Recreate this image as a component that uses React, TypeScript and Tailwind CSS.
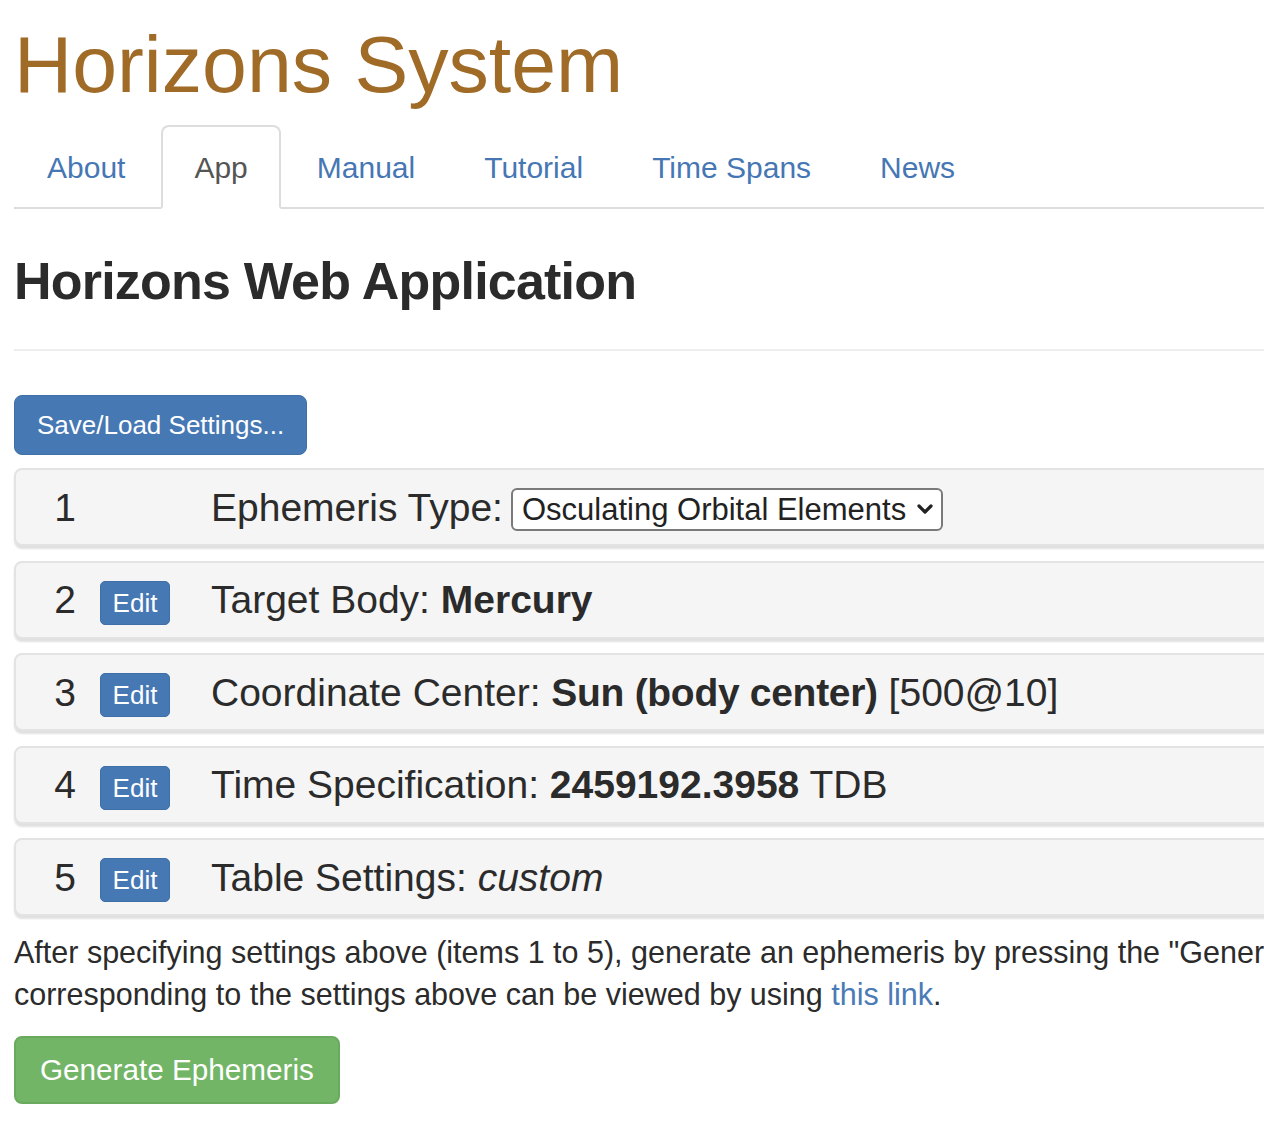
import React from "react";

const tabs = ["About", "App", "Manual", "Tutorial", "Time Spans", "News"];

function EditBtn() {
  return (
    <span className="mt-[6px] flex h-[44px] w-[70px] items-center justify-center rounded-[5px] border border-[#3f6fa9] bg-[#4678b4] text-[26px] leading-none text-white">
      Edit
    </span>
  );
}

function Row({ n, edit, children }: { n: number; edit: boolean; children: React.ReactNode }) {
  return (
    <div className="flex h-[78px] items-center rounded-[8px] border-2 border-[#e3e3e3] bg-[#f5f5f5] shadow-[0_3px_2px_rgba(0,0,0,0.12)]">
      <span className="ml-[24px] w-[50px] text-center text-[39px] leading-none text-[#2b2b2b]">{n}</span>
      <span className="ml-[10px] flex w-[70px] items-center">{edit ? <EditBtn /> : null}</span>
      <div className="ml-[41px] flex items-center whitespace-nowrap text-[39px] leading-none text-[#2b2b2b]">{children}</div>
    </div>
  );
}

export default function App() {
  return (
    <div className="w-full overflow-hidden bg-white font-['Liberation_Sans',Arial,sans-serif] text-[#2b2b2b]">
      <div className="w-[1600px] pl-[14px] pb-[40px]">
        <h1 className="pt-[20px] text-[80.6px] leading-[88px] text-[#a06a27]">Horizons System</h1>

        <ul className="mt-[17px] flex border-b-2 border-[#dddddd]">
          {tabs.map((t) => (
            <li key={t} className="-mb-[2px] mr-[3px]">
              {t === "App" ? (
                <span className="block rounded-t-[8px] border-2 border-[#dddddd] border-b-transparent bg-white px-[31px] pt-[19px] pb-[17px] text-[30px] leading-[44px] text-[#555555]">
                  {t}
                </span>
              ) : (
                <a className="block rounded-t-[8px] border-2 border-transparent px-[31px] pt-[19px] pb-[17px] text-[30px] leading-[44px] text-[#4677b4]">
                  {t}
                </a>
              )}
            </li>
          ))}
        </ul>

        <h2 className="mt-[44px] border-b-2 border-[#eeeeee] pb-[39px] text-[52px] font-bold leading-[57px] tracking-[-0.8px] text-[#2b2b2b]">
          Horizons Web Application
        </h2>

        <button className="mt-[44px] h-[60px] rounded-[8px] border border-[#3f6fa9] bg-[#4678b4] px-[22px] text-[26px] leading-none text-white">
          Save/Load Settings...
        </button>

        <div className="mt-[13px] flex flex-col gap-[14.5px]">
          <Row n={1} edit={false}>
            <span>Ephemeris Type:</span>
            <span className="ml-[8px] mt-[4px] inline-flex h-[43px] items-center rounded-[6px] border-2 border-[#7a7a7a] bg-white pl-[9px] pr-[7px] text-[31px] leading-none text-[#222]">
              Osculating Orbital Elements
              <svg className="ml-[10px]" width="18" height="12" viewBox="0 0 18 12">
                <path d="M3 3 L9 9 L15 3" fill="none" stroke="#222" strokeWidth="3.2" strokeLinecap="round" strokeLinejoin="round" />
              </svg>
            </span>
          </Row>
          <Row n={2} edit>
            <span>
              Target Body: <b>Mercury</b>
            </span>
          </Row>
          <Row n={3} edit>
            <span>
              Coordinate Center: <b className="tracking-[-0.3px]">Sun (body center)</b> [500@10]
            </span>
          </Row>
          <Row n={4} edit>
            <span>
              Time Specification: <b>2459192.3958</b> TDB
            </span>
          </Row>
          <Row n={5} edit>
            <span>
              Table Settings: <i>custom</i>
            </span>
          </Row>
        </div>

        <p className="mt-[15px] text-[30.5px] leading-[42px] text-[#2b2b2b]">
          <span className="whitespace-nowrap">
            After specifying settings above (items 1 to 5), generate an ephemeris by pressing the "Generate Ephemeris" button below. The equivalent API URL
          </span>
          <br />
          corresponding to the settings above can be viewed by using <a className="text-[#4a7bb7]">this link</a>.
        </p>

        <button className="mt-[21px] h-[68px] rounded-[8px] border-2 border-[#6aaa5e] bg-[#72b566] px-[24px] text-[29.7px] leading-none text-white">
          Generate Ephemeris
        </button>
      </div>
    </div>
  );
}
